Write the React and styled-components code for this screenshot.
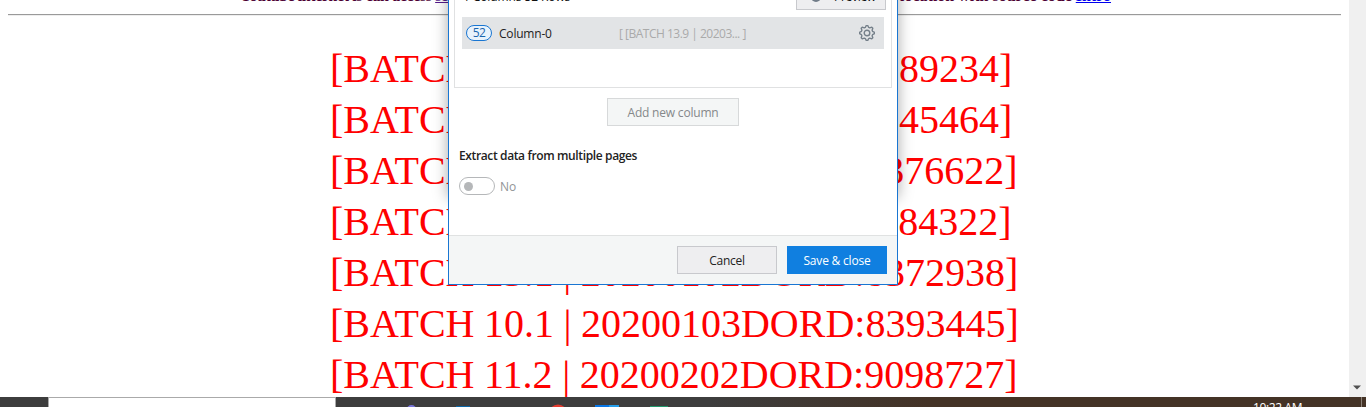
import React from "react";
import styled, { createGlobalStyle } from "styled-components";

const Global = createGlobalStyle`
  *{box-sizing:border-box}
  html,body{margin:0;height:407px;overflow:hidden;background:#fff}
`;
const ui = `"Open Sans","Noto Sans",sans-serif`;
const Screen = styled.div`
  position:relative;width:1366px;height:407px;overflow:hidden;display:flex;flex-direction:column;
`;
const Browser = styled.div`height:397px;display:flex;overflow:hidden;`;
const Page = styled.main`
  width:1349px;height:397px;overflow:hidden;padding:0 8px;font-family:"Liberation Serif",serif;
`;
const Heading = styled.div`
  height:18px;margin-top:-13px;padding-left:232px;padding-right:230px;display:flex;justify-content:space-between;
  font-weight:bold;font-size:16px;line-height:18px;color:#4b0033;white-space:nowrap;
`;
const Lead = styled.span`letter-spacing:-.4px;`;
const Visited = styled.a`color:#551a8b;text-decoration:underline;`;
const Link = styled(Visited)`color:#00e;`;
const Rule = styled.hr`border:0;border-top:1px solid #9a9a9a;border-bottom:1px solid #eee;height:2px;margin:9px 0 27px;`;
const Batch = styled.div`
  height:51px;line-height:51px;padding-left:322px;font-size:40px;color:#f00;white-space:pre;
  word-spacing:${p => p.$gap || 0}px;
`;
const Scrollbar = styled.div`
  width:17px;background:#f0f0f0;display:flex;align-items:flex-end;justify-content:center;padding-bottom:7px;
`;
const Taskbar = styled.footer`
  height:10px;display:flex;overflow:hidden;background:linear-gradient(90deg,#3d3d3d 0 52%,#443326 68%);
`;
const Start = styled.div`width:48px;`;
const Search = styled.div`width:288px;background:#fff;border:1px solid #aaa;border-bottom:0;`;
const Apps = styled.svg`width:400px;height:10px;`;
const Clock = styled.div`
  width:60px;margin-left:517px;padding-top:4px;font:12px/14px ${ui};color:#fff;white-space:nowrap;letter-spacing:-.35px;
`;
const Desktop = styled.div`width:5px;margin-left:auto;border-left:1px solid #8b8178;`;
const Shade = styled.div`
  position:absolute;left:448px;top:-20px;width:450px;height:218px;box-shadow:0 0 14px rgba(0,0,0,.34);
`;
const Dialog = styled.section`
  position:absolute;left:448px;top:0;width:450px;height:285px;background:#fff;border:1px solid #1976d2;border-top:0;
  display:flex;flex-direction:column;font:12px/16px ${ui};color:#222;
`;
const Columns = styled.div`
  height:88px;margin:0 5px;border:1px solid #e0e1e2;border-top:0;padding:0 7px;
`;
const Summary = styled.div`
  height:17px;display:flex;justify-content:space-between;align-items:flex-start;overflow:hidden;margin-right:-2px;
`;
const Count = styled.span`margin:-11px 0 0 1px;letter-spacing:-.1px;color:#111;`;
const Preview = styled.div`
  width:90px;height:28px;margin-top:-18px;border:1px solid #c8c9cd;background:#eeeef0;display:flex;gap:13px;
  align-items:center;padding:2px 0 0 14px;color:#111;letter-spacing:-.3px;
`;
const Dot = styled.i`width:10px;height:10px;margin-top:-1px;border-radius:50%;background:#717c88;`;
const Entry = styled.div`
  height:32px;background:#e2e4e6;display:flex;align-items:center;padding:0 9px 0 4px;
`;
const Badge = styled.span`
  width:26px;height:16px;border:1px solid #1976d2;border-radius:8px;background:#e9f3fc;color:#1b65ad;
  text-align:center;font-size:12px;line-height:14px;letter-spacing:-.6px;
`;
const Name = styled.span`width:120px;margin-left:7px;padding-top:1px;letter-spacing:-.2px;`;
const Value = styled.span`color:#aaa;padding-top:1px;flex:1;letter-spacing:-.5px;white-space:nowrap;`;
const Button = styled.button`
  width:${p => p.$w || 100}px;height:28px;padding:2px 0 0;font:12px/16px ${ui};letter-spacing:${p => p.$ls || 0}px;
  border:1px solid ${p => p.$kind === "primary" ? "#107fe0" : p.$kind === "disabled" ? "#d7d9da" : "#c8c9cd"};
  background:${p => p.$kind === "primary" ? "#107fe0" : p.$kind === "disabled" ? "#f4f6f6" : "#eeeef0"};
  color:${p => p.$kind === "primary" ? "#fff" : p.$kind === "disabled" ? "#85888a" : "#222"};
`;
const Add = styled.div`display:flex;justify-content:center;margin-top:10px;`;
const Label = styled.div`margin:22px 0 0 10px;font-weight:600;letter-spacing:-.37px;`;
const Option = styled.div`display:flex;align-items:center;gap:5px;margin:13px 0 0 10px;height:18px;color:#929496;`;
const State = styled.span`padding-top:2px;`;
const Toggle = styled.span`
  width:36px;height:18px;border:1px solid #b5b7b9;border-radius:9px;display:flex;align-items:center;padding-left:4px;
`;
const Knob = styled.i`width:9px;height:9px;border-radius:50%;background:#b5b7b9;`;
const Actions = styled.div`
  height:49px;margin-top:auto;border-top:1px solid #e0e2e2;background:#f4f6f6;display:flex;justify-content:flex-end;
  gap:10px;padding:10px 10px 0;
`;

const rows = [
  ["[BATCH 13.9 | 20203004DORD:8389234]", -2.6],
  ["[BATCH 12.8 | 20200305DORD:8345464]", -2.6],
  ["[BATCH 10.5 | 20200306DORD:8376622]", -0.9],
  ["[BATCH 11.4 | 20200307DORD:8384322]", -2.4],
  ["[BATCH 13.1 | 20200102DORD:8372938]", -0.6],
  ["[BATCH 10.1 | 20200103DORD:8393445]", -0.5],
  ["[BATCH 11.2 | 20200202DORD:9098727]", -0.4],
];

const teeth = Array.from({ length: 32 }, (_, i) => {
  const a = ((i - 0.5) * Math.PI) / 16;
  const r = i % 4 < 2 ? 7.5 : 5.8;
  return `${(8 + r * Math.sin(a)).toFixed(2)},${(8 - r * Math.cos(a)).toFixed(2)}`;
}).join(" ");

const Gear = () => (
  <svg width="16" height="16" viewBox="0 0 16 16" fill="none" stroke="#75808a" strokeWidth="1.4">
    <polygon points={teeth} strokeLinejoin="round" />
    <circle cx="8" cy="8" r="2.8" />
  </svg>
);

export default function App() {
  return (
    <Screen>
      <Global />
      <Browser>
        <Page>
          <Heading>
            <Lead>Youtube internet is can access <Visited>search</Visited></Lead>
            <span>location with source code <Link>Intro</Link></span>
          </Heading>
          <Rule />
          {rows.map(([text, gap]) => <Batch key={text} $gap={gap}>{text}</Batch>)}
        </Page>
        <Scrollbar>
          <svg width="9" height="5"><path d="M0 .5h8L4 4.5z" fill="#505050" /></svg>
        </Scrollbar>
      </Browser>
      <Taskbar>
        <Start />
        <Search />
        <Apps>
          <circle cx="75.500" cy="13" r="5" fill="#7774d8" />
          <rect x="120" y="9" width="14" height="1" fill="#0b65a5" />
          <circle cx="222" cy="17" r="9.500" fill="#e33b2e" />
          <path d="M259 8h24v2h-24z" fill="#0876e6" />
          <path d="M273 8h10v2h-10z" fill="#249de9" />
          <path d="M314 9h18v1h-18z" fill="#21966a" />
        </Apps>
        <Clock>10:22 AM</Clock>
        <Desktop />
      </Taskbar>
      <Shade />
      <Dialog>
        <Columns>
          <Summary>
            <Count>1 Columns 52 Rows</Count>
            <Preview><Dot />Preview</Preview>
          </Summary>
          <Entry>
            <Badge>52</Badge>
            <Name>Column-0</Name>
            <Value>[ [BATCH 13.9 | 20203... ]</Value>
            <Gear />
          </Entry>
        </Columns>
        <Add><Button $w={132} $kind="disabled" $ls={-0.2}>Add new column</Button></Add>
        <Label>Extract data from multiple pages</Label>
        <Option><Toggle><Knob /></Toggle><State>No</State></Option>
        <Actions>
          <Button $ls={-0.3}>Cancel</Button>
          <Button $kind="primary" $ls={-0.2}>Save &amp; close</Button>
        </Actions>
      </Dialog>
    </Screen>
  );
}
